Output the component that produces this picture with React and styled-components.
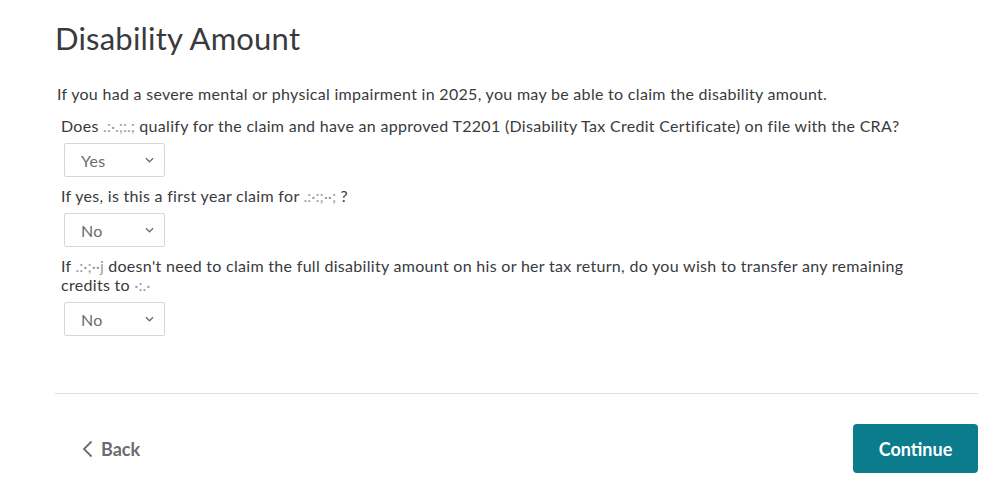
import React from "react";
import styled, { createGlobalStyle } from "styled-components";

const GlobalStyle = createGlobalStyle`
  html, body {
    margin: 0;
    padding: 0;
    background: #ffffff;
  }
  body {
    font-family: Lato, "Noto Sans", "Liberation Sans", sans-serif;
    color: #393a3d;
  }
`;

const questions = [
  {
    id: "qualify",
    before: "Does ",
    name: ".:·.;:.;",
    after: " qualify for the claim and have an approved T2201 (Disability Tax Credit Certificate) on file with the CRA?",
    value: "Yes",
  },
  {
    id: "first",
    before: "If yes, is this a first year claim for ",
    name: ".:·:;··;",
    after: " ?",
    value: "No",
  },
  {
    id: "transfer",
    before: "If ",
    name: ".:·;··j",
    after: " doesn't need to claim the full disability amount on his or her tax return, do you wish to transfer any remaining",
    second: "credits to ",
    tail: "·:.·",
    value: "No",
  },
];

const App = () => {
  return (
    <Page>
      <GlobalStyle />
      <Title>Disability Amount</Title>
      <Intro>
        If you had a severe mental or physical impairment in 2025, you may be able to claim the disability amount.
      </Intro>
      {questions.map((q) => (
        <Question key={q.id}>
          <Label htmlFor={q.id}>
            <Line>
              {q.before}
              <Hidden>{q.name}</Hidden>
              {q.after}
            </Line>
            {q.second && (
              <Line>
                {q.second}
                <Hidden>{q.tail}</Hidden>
              </Line>
            )}
          </Label>
          <SelectWrap>
            <Select id={q.id} defaultValue={q.value}>
              <option>Yes</option>
              <option>No</option>
            </Select>
            <Chevron viewBox="0 0 10 6" aria-hidden="true">
              <path d="M1 1l4 4 4-4" />
            </Chevron>
          </SelectWrap>
        </Question>
      ))}
      <Divider />
      <Footer>
        <BackButton type="button">
          <svg width="12" height="18" viewBox="0 0 12 18" aria-hidden="true">
            <path d="M10.5 1.5L3 9l7.5 7.5" fill="none" stroke="currentColor" strokeWidth="1.8" />
          </svg>
          Back
        </BackButton>
        <ContinueButton type="button">Continue</ContinueButton>
      </Footer>
    </Page>
  );
};

const Page = styled.div`
  padding: 0 20px 0 55px;
  display: flex;
  flex-direction: column;
  align-items: flex-start;
`;

const Title = styled.h1`
  margin: 18px 0 0 0;
  font-size: 31px;
  line-height: 40px;
  font-weight: 400;
  color: #393a3d;
  letter-spacing: 0.2px;
`;

const Intro = styled.p`
  margin: 26px 0 0 2px;
  font-size: 16px;
  line-height: 19px;
  letter-spacing: 0.3px;
  color: #393a3d;
`;

const Question = styled.div`
  margin-top: 13px;
  padding-left: 6px;
  display: flex;
  flex-direction: column;
  align-items: flex-start;
  & + & {
    margin-top: 9px;
  }
`;

const Label = styled.label`
  display: flex;
  flex-direction: column;
  font-size: 16px;
  line-height: 19px;
  letter-spacing: 0.3px;
  color: #393a3d;
`;

const Line = styled.span`
  white-space: nowrap;
`;

const Hidden = styled.span`
  color: #9a9ca1;
  letter-spacing: 0;
`;

const SelectWrap = styled.div`
  position: relative;
  margin: 8px 0 0 3px;
  width: 101px;
  height: 34px;
`;

const Select = styled.select`
  appearance: none;
  width: 100%;
  height: 100%;
  border: 1px solid #d4d7dc;
  border-radius: 2px;
  background: #ffffff;
  padding: 0 0 0 16px;
  font-family: inherit;
  font-size: 16px;
  letter-spacing: 0.3px;
  color: #6b6c72;
  outline: none;
`;

const Chevron = styled.svg`
  position: absolute;
  right: 11px;
  top: 14px;
  width: 9px;
  height: 6px;
  fill: none;
  stroke: #6b6c72;
  stroke-width: 1.4;
  pointer-events: none;
`;

const Divider = styled.hr`
  align-self: stretch;
  margin: 57px 0 0 0;
  border: none;
  border-top: 1px solid #dcdee2;
`;

const Footer = styled.div`
  align-self: stretch;
  display: flex;
  justify-content: space-between;
  align-items: center;
  padding: 30px 0 14px 0;
`;

const BackButton = styled.button`
  display: flex;
  align-items: center;
  gap: 8px;
  margin-left: 26px;
  border: none;
  background: none;
  padding: 0;
  font-family: inherit;
  font-size: 18px;
  font-weight: 700;
  color: #6b6c72;
  cursor: pointer;
`;

const ContinueButton = styled.button`
  width: 125px;
  height: 49px;
  border: none;
  border-radius: 4px;
  background: #0a7c8c;
  color: #ffffff;
  font-family: inherit;
  font-size: 18px;
  font-weight: 700;
  cursor: pointer;
`;

export default App;
